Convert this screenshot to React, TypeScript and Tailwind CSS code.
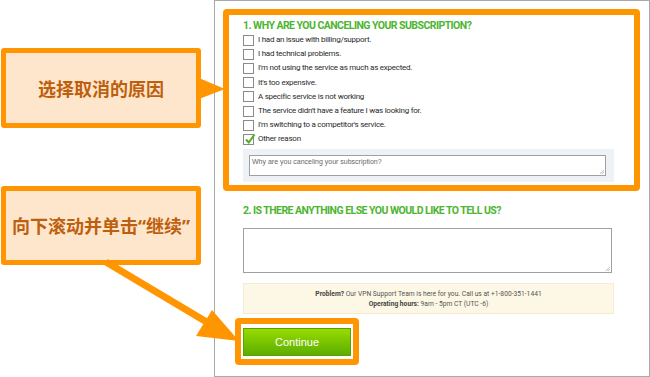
import React from "react";

const reasons = [
  "I had an issue with billing/support.",
  "I had technical problems.",
  "I'm not using the service as much as expected.",
  "It's too expensive.",
  "A specific service is not working",
  "The service didn't have a feature I was looking for.",
  "I'm switching to a competitor's service.",
  "Other reason",
];

function Checkbox({ checked }: { checked?: boolean }) {
  return (
    <span className="relative flex h-[11px] w-[11px] shrink-0 items-center justify-center border border-[#8a8a8a] bg-white">
      {checked && (
        <svg viewBox="0 0 12 12" className="absolute left-[0px] top-[-2px] h-[12px] w-[12px]">
          <path d="M2 6.5 L4.8 9.5 L10.5 1.5" fill="none" stroke="#4caf1f" strokeWidth="2" />
        </svg>
      )}
    </span>
  );
}

function Callout({ children, className }: { children: React.ReactNode; className: string }) {
  return (
    <div
      className={`ml-[1px] flex w-[200px] items-center justify-center rounded-[3px] border-[5px] border-[#ff9500] bg-[#fee6cc] font-bold text-[#bd5f0c] ${className}`}
      style={{ fontFamily: '"Noto Sans CJK SC", "Noto Sans", sans-serif' }}
    >
      {children}
    </div>
  );
}

export default function App() {
  const heading = "text-[10.5px] font-bold leading-[14px] text-[#4cb52f] tracking-[-0.55px] whitespace-nowrap";
  const latin = { fontFamily: '"Noto Sans", sans-serif' };
  return (
    <div
      className="relative flex h-[377px] w-[650px] overflow-hidden bg-white"
      style={{ fontFamily: 'Roboto, "Liberation Sans", sans-serif' }}
    >
      <div className="flex w-[214px] shrink-0 flex-col">
        <Callout className="mt-[48px] h-[80px] text-[18px]">选择取消的原因</Callout>
        <Callout className="mt-[58px] h-[79px] text-[18px]">
          <span>
            向下滚动并单击<span style={latin}>“</span>继续<span style={latin}>”</span>
          </span>
        </Callout>
      </div>

      <div className="flex h-[377px] w-[436px] shrink-0 flex-col border border-[#a9a9a9]">
        <div className="ml-[8px] mt-[8px] flex h-[182px] w-[417px] flex-col rounded-[4px] border-[6px] border-[#ff9500] pl-[14px] pt-[4px]">
          <div className={heading}>1. WHY ARE YOU CANCELING YOUR SUBSCRIPTION?</div>
          <div className="flex flex-col">
            {reasons.map((r, i) => (
              <div key={r} className="flex h-[14.2px] items-center gap-[4px]">
                <Checkbox checked={i === reasons.length - 1} />
                <span className="whitespace-nowrap text-[8px] tracking-[-0.25px] text-[#2a2a2a]">{r}</span>
              </div>
            ))}
          </div>
          <div className="mt-[2.4px] h-[33px] w-[371px] bg-[#eef2f6] p-[6px]">
            <div className="relative h-[21px] w-[357px] border border-[#a0a0a0] bg-white px-[2px] pt-[1px] text-[7px] leading-[10px] text-[#666]" style={{ fontFamily: '"Liberation Sans", sans-serif' }}>
              Why are you canceling your subscription?
              <svg viewBox="0 0 6 6" className="absolute bottom-[1px] right-[1px] h-[5px] w-[5px]">
                <path d="M1 6 L6 1 M3.5 6 L6 3.5" stroke="#999" strokeWidth="0.8" />
              </svg>
            </div>
          </div>
        </div>

        <div className={`${heading} ml-[28px] mt-[13px]`}>2. IS THERE ANYTHING ELSE YOU WOULD LIKE TO TELL US?</div>

        <div className="relative ml-[28px] mt-[10px] h-[45px] w-[369px] border border-[#a0a0a0] bg-white">
          <svg viewBox="0 0 6 6" className="absolute bottom-[1px] right-[1px] h-[5px] w-[5px]">
            <path d="M1 6 L6 1 M3.5 6 L6 3.5" stroke="#999" strokeWidth="0.8" />
          </svg>
        </div>

        <div className="ml-[28px] mt-[10px] flex h-[31px] w-[371px] flex-col items-center justify-center border border-[#f3ecd0] bg-[#fdf8e6] text-[6.7px] leading-[10px] text-[#555]">
          <div>
            <b className="text-[#444]">Problem?</b> Our VPN Support Team is here for you. Call us at +1-800-351-1441
          </div>
          <div>
            <b className="text-[#444]">Operating hours:</b> 9am - 5pm CT (UTC -6)
          </div>
        </div>

        <div className="ml-[20px] mt-[4px] h-[47px] w-[124px] rounded-[4px] border-[6px] border-[#ff9500] px-[2px] pt-[4px]">
          <button
            className="flex h-[28px] w-[108px] items-center justify-center border border-[#5a9e0a] bg-gradient-to-b from-[#97dc00] to-[#5cad00] text-[11px] text-white"
            style={{ fontFamily: '"Liberation Sans", sans-serif' }}
          >
            Continue
          </button>
        </div>
      </div>

      <svg className="pointer-events-none absolute inset-0" width="650" height="377" viewBox="0 0 650 377">
        <polygon points="199,78 199,99 225,89" fill="#ff9500" />
        <line x1="106" y1="262" x2="210" y2="324" stroke="#ff9500" strokeWidth="7" />
        <polygon points="212,310 196,336 239,341" fill="#ff9500" />
      </svg>
    </div>
  );
}
